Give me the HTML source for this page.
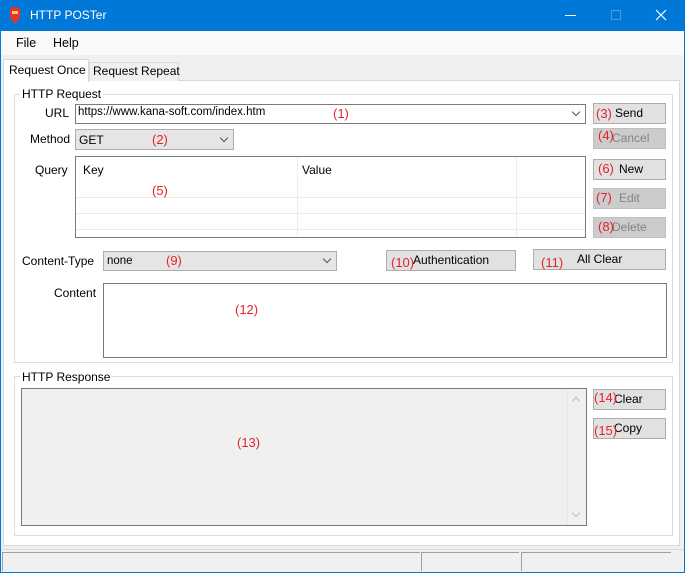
<!DOCTYPE html>
<html><head><meta charset="utf-8"><style>
*{box-sizing:border-box;margin:0;padding:0}
body{width:685px;height:573px;position:relative;overflow:hidden;background:#f0f0f0;font-family:"Liberation Sans",sans-serif;font-size:12px;color:#000}
.a{position:absolute}
.r{color:#e0242c;position:absolute;font-size:13px}
.btn{position:absolute;background:#e1e1e1;border:1px solid #adadad;font-size:12px;line-height:18px;text-align:left}
.dis{background:#cccccc;border-color:#bfbfbf;color:#838383}
.box{position:absolute;border:1px solid #7a7a7a;background:#fff}
.grp{position:absolute;border:1px solid #dcdcdc}
.lbl{position:absolute;background:#fff;padding:0 2px}
.chev{position:absolute;width:6px;height:6px;border-right:1px solid #555;border-bottom:1px solid #555;transform:rotate(45deg)}
</style></head><body>
<div class="a" style="left:0;top:0;width:685px;height:31px;background:#0078d7"></div>
<div class="a" style="left:10px;top:7px;width:10px;height:13px;background:#e8322b;border-radius:3px"></div>
<div class="a" style="left:12px;top:11px;width:6px;height:3px;background:#f7d070"></div>
<div class="a" style="left:13px;top:20px;width:4px;height:3px;background:#e8322b"></div>
<div class="a" style="left:30px;top:8px;color:#fff;font-size:12px">HTTP POSTer</div>
<div class="a" style="left:565px;top:15px;width:11px;height:1px;background:#fff"></div>
<div class="a" style="left:611px;top:10px;width:10px;height:10px;border:1px solid #4a9be0"></div>
<svg class="a" style="left:655px;top:9px" width="12" height="12"><path d="M1 1L11 11M11 1L1 11" stroke="#fff" stroke-width="1.2"/></svg>
<div class="a" style="left:0;top:31px;width:685px;height:24px;background:#f9f9f9"></div>
<div class="a" style="left:16px;top:36px;font-size:12.5px">File</div>
<div class="a" style="left:53px;top:36px;font-size:12.5px">Help</div>
<div class="a" style="left:0;top:31px;width:1px;height:542px;background:#0078d7"></div>
<div class="a" style="left:684px;top:31px;width:1px;height:542px;background:#0078d7"></div>
<div class="a" style="left:0;top:572px;width:685px;height:1px;background:#0078d7"></div>
<!-- tabs -->
<div class="a" style="left:3px;top:80px;width:677px;height:466px;background:#fff;border:1px solid #d9d9d9"></div>
<div class="a" style="left:89px;top:62px;width:90px;height:19px;background:#f0f0f0;border:1px solid #d9d9d9;border-bottom:none"></div>
<div class="a" style="left:93px;top:64px;font-size:12px">Request Repeat</div>
<div class="a" style="left:3px;top:59px;width:86px;height:23px;background:#fff;border:1px solid #d9d9d9;border-bottom:none"></div>
<div class="a" style="left:9px;top:63px;font-size:12px">Request Once</div>
<!-- request group -->
<div class="grp" style="left:14px;top:94px;width:659px;height:269px"></div>
<div class="lbl" style="left:20px;top:87px">HTTP Request</div>
<div class="a" style="left:45px;top:106px">URL</div>
<div class="box" style="left:75px;top:104px;width:511px;height:20px"></div>
<div class="a" style="left:78px;top:106px;font-size:11.5px">https://www.kana-soft.com/index.htm</div>
<div class="r" style="left:333px;top:106px">(1)</div>
<div class="chev" style="left:573px;top:109px"></div>
<div class="a" style="left:30px;top:132px">Method</div>
<div class="box" style="left:75px;top:129px;width:159px;height:21px;background:#e5e5e5;border-color:#adadad"></div>
<div class="a" style="left:79px;top:133px">GET</div>
<div class="r" style="left:152px;top:132px">(2)</div>
<div class="chev" style="left:221px;top:135px"></div>
<div class="btn" style="left:593px;top:103px;width:73px;height:21px;padding-left:21px">Send</div><div class="r" style="left:596px;top:106px">(3)</div>
<div class="btn dis" style="left:593px;top:128px;width:73px;height:21px;padding-left:18px">Cancel</div><div class="r" style="left:598px;top:128px">(4)</div>
<div class="a" style="left:35px;top:163px">Query</div>
<div class="box" style="left:75px;top:156px;width:511px;height:82px"></div>
<div class="a" style="left:297px;top:157px;width:1px;height:80px;background:#ececec"></div>
<div class="a" style="left:516px;top:157px;width:1px;height:80px;background:#ececec"></div>
<div class="a" style="left:76px;top:197px;width:509px;height:1px;background:#ececec"></div>
<div class="a" style="left:76px;top:213px;width:509px;height:1px;background:#ececec"></div>
<div class="a" style="left:76px;top:229px;width:509px;height:1px;background:#ececec"></div>
<div class="a" style="left:83px;top:163px">Key</div>
<div class="a" style="left:302px;top:163px">Value</div>
<div class="r" style="left:152px;top:183px">(5)</div>
<div class="btn" style="left:593px;top:159px;width:73px;height:21px;padding-left:25px">New</div><div class="r" style="left:598px;top:161px">(6)</div>
<div class="btn dis" style="left:593px;top:188px;width:73px;height:21px;padding-left:25px">Edit</div><div class="r" style="left:596px;top:190px">(7)</div>
<div class="btn dis" style="left:593px;top:217px;width:73px;height:21px;padding-left:18px">Delete</div><div class="r" style="left:598px;top:219px">(8)</div>
<div class="a" style="left:22px;top:254px">Content-Type</div>
<div class="box" style="left:103px;top:251px;width:234px;height:20px;background:#e5e5e5;border-color:#adadad"></div>
<div class="a" style="left:107px;top:255px;font-size:11.5px">none</div>
<div class="r" style="left:166px;top:253px">(9)</div>
<div class="chev" style="left:324px;top:256px"></div>
<div class="btn" style="left:386px;top:250px;width:130px;height:21px;padding-left:26px">Authentication</div><div class="r" style="left:391px;top:255px">(10)</div>
<div class="btn" style="left:533px;top:249px;width:133px;height:21px;padding-left:43px">All Clear</div><div class="r" style="left:541px;top:255px">(11)</div>
<div class="a" style="left:54px;top:286px">Content</div>
<div class="box" style="left:103px;top:283px;width:564px;height:75px"></div>
<div class="r" style="left:235px;top:302px">(12)</div>
<!-- response -->
<div class="grp" style="left:14px;top:376px;width:659px;height:160px"></div>
<div class="lbl" style="left:20px;top:370px">HTTP Response</div>
<div class="box" style="left:21px;top:388px;width:566px;height:138px;background:#f0f0f0"></div>
<div class="a" style="left:567px;top:389px;width:1px;height:136px;background:#e6e6e6"></div>
<div class="chev" style="left:573px;top:398px;border-color:#bbb;transform:rotate(225deg)"></div>
<div class="chev" style="left:573px;top:510px;border-color:#bbb"></div>
<div class="r" style="left:237px;top:435px">(13)</div>
<div class="btn" style="left:593px;top:389px;width:73px;height:21px;padding-left:20px">Clear</div><div class="r" style="left:594px;top:390px">(14)</div>
<div class="btn" style="left:593px;top:418px;width:73px;height:21px;padding-left:20px">Copy</div><div class="r" style="left:594px;top:423px">(15)</div>
<!-- status -->
<div class="a" style="left:1px;top:549px;width:683px;height:1px;background:#dcdcdc"></div>
<div class="a" style="left:2px;top:552px;width:418px;height:19px;border-top:1px solid #a0a0a0;border-left:1px solid #a0a0a0"></div>
<div class="a" style="left:421px;top:552px;width:98px;height:19px;border-top:1px solid #a0a0a0;border-left:1px solid #a0a0a0"></div>
<div class="a" style="left:521px;top:552px;width:150px;height:19px;border-top:1px solid #a0a0a0;border-left:1px solid #a0a0a0"></div>
</body></html>
